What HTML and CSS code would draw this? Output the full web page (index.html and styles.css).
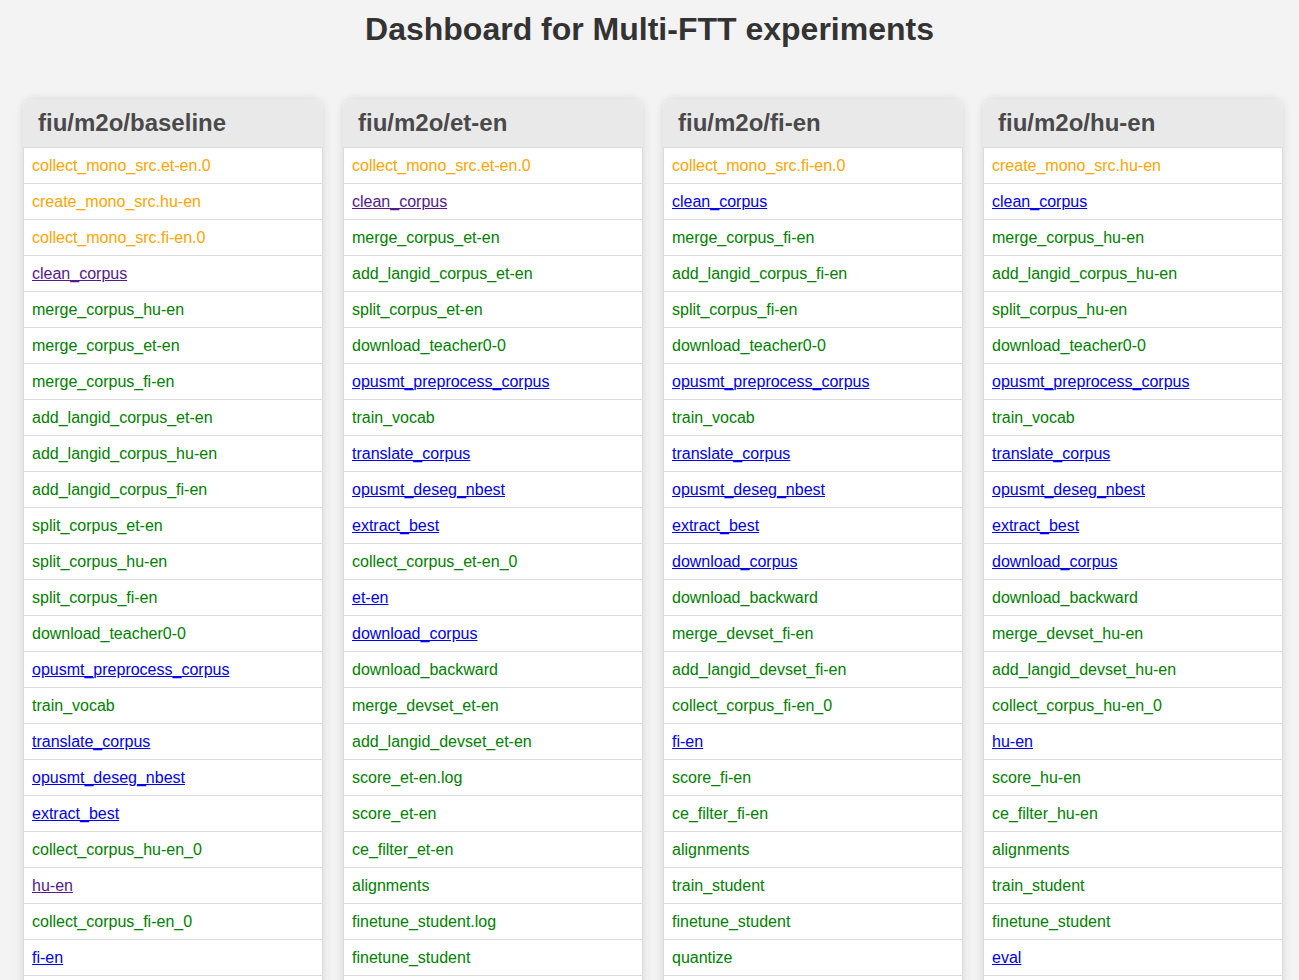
FILE: index.html
```html
<!DOCTYPE html>
<html>
<head>
<meta charset="utf-8">
<title>Dashboard for Multi-FTT experiments</title>
<link rel="stylesheet" href="styles.css">
</head>
<body>
<h1 class="title">Dashboard for Multi-FTT experiments</h1>
<div class="board">
  <section class="card">
    <h2 class="card-head">fiu/m2o/baseline</h2>
    <ul class="tasks">
      <li class="task pending">collect_mono_src.et-en.0</li>
      <li class="task pending">create_mono_src.hu-en</li>
      <li class="task pending">collect_mono_src.fi-en.0</li>
      <li class="task"><a class="link visited" href="#">clean_corpus</a></li>
      <li class="task">merge_corpus_hu-en</li>
      <li class="task">merge_corpus_et-en</li>
      <li class="task">merge_corpus_fi-en</li>
      <li class="task">add_langid_corpus_et-en</li>
      <li class="task">add_langid_corpus_hu-en</li>
      <li class="task">add_langid_corpus_fi-en</li>
      <li class="task">split_corpus_et-en</li>
      <li class="task">split_corpus_hu-en</li>
      <li class="task">split_corpus_fi-en</li>
      <li class="task">download_teacher0-0</li>
      <li class="task"><a class="link" href="#">opusmt_preprocess_corpus</a></li>
      <li class="task">train_vocab</li>
      <li class="task"><a class="link" href="#">translate_corpus</a></li>
      <li class="task"><a class="link" href="#">opusmt_deseg_nbest</a></li>
      <li class="task"><a class="link" href="#">extract_best</a></li>
      <li class="task">collect_corpus_hu-en_0</li>
      <li class="task"><a class="link visited" href="#">hu-en</a></li>
      <li class="task">collect_corpus_fi-en_0</li>
      <li class="task"><a class="link" href="#">fi-en</a></li>
      <li class="task tail"></li>
    </ul>
  </section>
  <section class="card">
    <h2 class="card-head">fiu/m2o/et-en</h2>
    <ul class="tasks">
      <li class="task pending">collect_mono_src.et-en.0</li>
      <li class="task"><a class="link visited" href="#">clean_corpus</a></li>
      <li class="task">merge_corpus_et-en</li>
      <li class="task">add_langid_corpus_et-en</li>
      <li class="task">split_corpus_et-en</li>
      <li class="task">download_teacher0-0</li>
      <li class="task"><a class="link" href="#">opusmt_preprocess_corpus</a></li>
      <li class="task">train_vocab</li>
      <li class="task"><a class="link" href="#">translate_corpus</a></li>
      <li class="task"><a class="link" href="#">opusmt_deseg_nbest</a></li>
      <li class="task"><a class="link" href="#">extract_best</a></li>
      <li class="task">collect_corpus_et-en_0</li>
      <li class="task"><a class="link" href="#">et-en</a></li>
      <li class="task"><a class="link" href="#">download_corpus</a></li>
      <li class="task">download_backward</li>
      <li class="task">merge_devset_et-en</li>
      <li class="task">add_langid_devset_et-en</li>
      <li class="task">score_et-en.log</li>
      <li class="task">score_et-en</li>
      <li class="task">ce_filter_et-en</li>
      <li class="task">alignments</li>
      <li class="task">finetune_student.log</li>
      <li class="task">finetune_student</li>
      <li class="task tail"></li>
    </ul>
  </section>
  <section class="card">
    <h2 class="card-head">fiu/m2o/fi-en</h2>
    <ul class="tasks">
      <li class="task pending">collect_mono_src.fi-en.0</li>
      <li class="task"><a class="link" href="#">clean_corpus</a></li>
      <li class="task">merge_corpus_fi-en</li>
      <li class="task">add_langid_corpus_fi-en</li>
      <li class="task">split_corpus_fi-en</li>
      <li class="task">download_teacher0-0</li>
      <li class="task"><a class="link" href="#">opusmt_preprocess_corpus</a></li>
      <li class="task">train_vocab</li>
      <li class="task"><a class="link" href="#">translate_corpus</a></li>
      <li class="task"><a class="link" href="#">opusmt_deseg_nbest</a></li>
      <li class="task"><a class="link" href="#">extract_best</a></li>
      <li class="task"><a class="link" href="#">download_corpus</a></li>
      <li class="task">download_backward</li>
      <li class="task">merge_devset_fi-en</li>
      <li class="task">add_langid_devset_fi-en</li>
      <li class="task">collect_corpus_fi-en_0</li>
      <li class="task"><a class="link" href="#">fi-en</a></li>
      <li class="task">score_fi-en</li>
      <li class="task">ce_filter_fi-en</li>
      <li class="task">alignments</li>
      <li class="task">train_student</li>
      <li class="task">finetune_student</li>
      <li class="task">quantize</li>
      <li class="task tail"></li>
    </ul>
  </section>
  <section class="card">
    <h2 class="card-head">fiu/m2o/hu-en</h2>
    <ul class="tasks">
      <li class="task pending">create_mono_src.hu-en</li>
      <li class="task"><a class="link" href="#">clean_corpus</a></li>
      <li class="task">merge_corpus_hu-en</li>
      <li class="task">add_langid_corpus_hu-en</li>
      <li class="task">split_corpus_hu-en</li>
      <li class="task">download_teacher0-0</li>
      <li class="task"><a class="link" href="#">opusmt_preprocess_corpus</a></li>
      <li class="task">train_vocab</li>
      <li class="task"><a class="link" href="#">translate_corpus</a></li>
      <li class="task"><a class="link" href="#">opusmt_deseg_nbest</a></li>
      <li class="task"><a class="link" href="#">extract_best</a></li>
      <li class="task"><a class="link" href="#">download_corpus</a></li>
      <li class="task">download_backward</li>
      <li class="task">merge_devset_hu-en</li>
      <li class="task">add_langid_devset_hu-en</li>
      <li class="task">collect_corpus_hu-en_0</li>
      <li class="task"><a class="link" href="#">hu-en</a></li>
      <li class="task">score_hu-en</li>
      <li class="task">ce_filter_hu-en</li>
      <li class="task">alignments</li>
      <li class="task">train_student</li>
      <li class="task">finetune_student</li>
      <li class="task"><a class="link" href="#">eval</a></li>
      <li class="task tail"></li>
    </ul>
  </section>
</div>
</body>
</html>
```
FILE: styles.css
```css
html, body {
  margin: 0;
  padding: 0;
}
body {
  background: #f3f3f3;
  font-family: "Liberation Sans", Arial, sans-serif;
  color: #333;
}
.title {
  margin: 11px 0 0;
  font-size: 32px;
  font-weight: bold;
  line-height: 37px;
  text-align: center;
  color: #333;
}
.board {
  display: flex;
  gap: 20px;
  padding: 51px 16px 0 23px;
  align-items: flex-start;
}
.card {
  width: 300px;
  flex: 0 0 300px;
  border-radius: 10px;
  background: #fff;
  box-shadow: 0 0 8px rgba(0, 0, 0, 0.12);
  overflow: hidden;
}
.card-head {
  margin: 0;
  height: 48px;
  line-height: 48px;
  padding: 0 15px;
  background: #e9e9e9;
  color: #4a4a4a;
  font-size: 24px;
  font-weight: bold;
}
.tasks {
  list-style: none;
  margin: 0;
  padding: 0;
}
.task {
  height: 35px;
  line-height: 35px;
  padding: 0 8px;
  border: 1px solid #dcdcdc;
  border-top: none;
  background: #fff;
  color: #008000;
  font-size: 16px;
}
.task:first-child {
  border-top: 1px solid #dcdcdc;
}
.task.pending {
  color: #ffa500;
}
.link {
  color: #0000ee;
  text-decoration: underline;
}
.link.visited {
  color: #551a8b;
}
```
